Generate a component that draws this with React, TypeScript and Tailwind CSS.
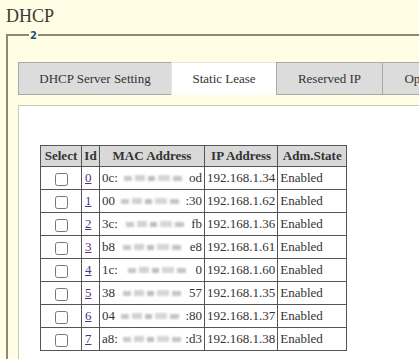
const leases = [
  { id: 0, head: '0c:', tail: 'od', ip: '192.168.1.34' },
  { id: 1, head: '00', tail: ':30', ip: '192.168.1.62' },
  { id: 2, head: '3c:', tail: 'fb', ip: '192.168.1.36' },
  { id: 3, head: 'b8', tail: 'e8', ip: '192.168.1.61' },
  { id: 4, head: '1c:', tail: '0', ip: '192.168.1.60' },
  { id: 5, head: '38', tail: '57', ip: '192.168.1.35' },
  { id: 6, head: '04', tail: ':80', ip: '192.168.1.37' },
  { id: 7, head: 'a8:', tail: ':d3', ip: '192.168.1.38' },
];

const tabs = [
  { label: 'DHCP Server Setting', w: 'w-[154px]', active: false },
  { label: 'Static Lease', w: 'w-[106px]', active: true },
  { label: 'Reserved IP', w: 'w-[107px]', active: false },
  { label: 'Options', w: 'w-[86px]', active: false },
];

const BlurBlock = () => (
  <span className="inline-flex items-center gap-[3px] align-middle mx-[2px] h-[18px] bg-white">
    <span className="w-[8px] h-[5px] bg-[#c8c8c8] blur-[1px]" />
    <span className="w-[10px] h-[6px] bg-[#d2d2d2] blur-[1px]" />
    <span className="w-[7px] h-[5px] bg-[#bdbdbd] blur-[1px]" />
    <span className="w-[12px] h-[6px] bg-[#d6d6d6] blur-[1px]" />
    <span className="w-[9px] h-[5px] bg-[#c4c4c4] blur-[1px]" />
  </span>
);

export default function App() {
  return (
    <div className="w-[419px] h-[359px] overflow-hidden bg-[#fffde3] text-[#333] font-['Liberation_Serif',serif]">
      <div className="pl-[6px] pt-[5px] h-[34px] text-[18px] leading-[22px] text-[#3a3a3a]">DHCP</div>

      <div className="relative ml-[6px] w-[520px] h-[400px] border-l-2 border-t-2 border-[#8c8a72] pt-[26px] pl-[10px]">
        <span className="absolute left-[21px] top-[-4px] text-[10px] leading-[8px] font-bold font-['DejaVu_Sans',sans-serif] text-[#1f5272] bg-[#fffde3] px-[1px]">2</span>

        <div className="flex h-[33px]">
          {tabs.map((t) => (
            <div
              key={t.label}
              className={`${t.w} shrink-0 flex items-center justify-center border border-[#a9a9a9] -ml-px first:ml-0 text-[13px] whitespace-nowrap ${t.active ? 'bg-white border-b-0 border-[#e6e6e0]' : 'bg-[#dcdcdc]'}`}
            >
              {t.label}
            </div>
          ))}
        </div>

        <div className="mt-[10px] border-l border-t border-[#c9c8b8] bg-white h-[300px] pl-[21px] pt-[39px]">
          <table className="border-collapse border border-[#555] text-[13px] leading-[16px]">
            <thead>
              <tr className="bg-[#d9d9d9] h-[21px]">
                <th className="border border-[#555] w-[41px] px-[2px] font-bold">Select</th>
                <th className="border border-[#555] w-[18px] px-[2px] font-bold">Id</th>
                <th className="border border-[#555] w-[105px] px-[2px] font-bold">MAC Address</th>
                <th className="border border-[#555] w-[73px] px-[2px] font-bold">IP Address</th>
                <th className="border border-[#555] w-[69px] px-[2px] font-bold">Adm.State</th>
              </tr>
            </thead>
            <tbody>
              {leases.map((l) => (
                <tr key={l.id} className="h-[23px]">
                  <td className="border border-[#555] text-center">
                    <input type="checkbox" className="w-[13px] h-[13px] align-middle" />
                  </td>
                  <td className="border border-[#555] px-[3px]">
                    <a href="#" className="underline text-[#55308a]">{l.id}</a>
                  </td>
                  <td className="border border-[#555] px-[2px] whitespace-nowrap">
                    <div className="flex items-center justify-between">
                      <span>{l.head}</span>
                      <BlurBlock />
                      <span>{l.tail}</span>
                    </div>
                  </td>
                  <td className="border border-[#555] px-[2px] whitespace-nowrap">{l.ip}</td>
                  <td className="border border-[#555] px-[2px]">Enabled</td>
                </tr>
              ))}
            </tbody>
          </table>
        </div>
      </div>
    </div>
  );
}
